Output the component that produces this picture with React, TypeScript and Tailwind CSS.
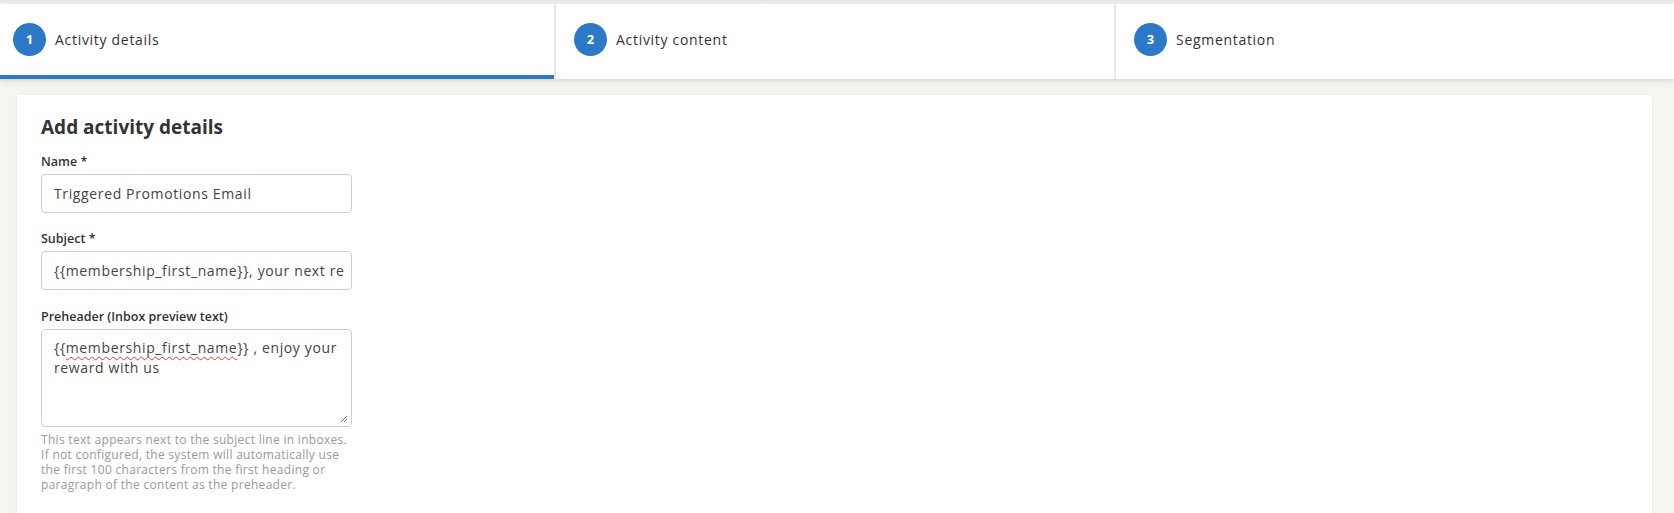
import React from 'react'

const steps = [
  { n: 1, label: 'Activity details', active: true },
  { n: 2, label: 'Activity content', active: false },
  { n: 3, label: 'Segmentation', active: false },
]

function Label({ children }: { children: React.ReactNode }) {
  return <div className="mb-[4px] text-[12.5px] leading-[16px] font-semibold text-[#333]">{children}</div>
}

export default function App() {
  return (
    <div className="min-h-screen bg-[#f5f4f1] font-['Open_Sans',sans-serif] text-[#333]">
      {/* header shadow */}
      <div className="h-[4px] bg-gradient-to-b from-[#e4e4e2] to-[#f1f1ef]" />

      {/* Stepper */}
      <div className="grid grid-cols-[554px_558px_1fr] gap-[2px] bg-[#e9e9e7] shadow-[0_2px_4px_rgba(0,0,0,0.12)]">
        {steps.map((s) => (
          <div
            key={s.n}
            className={
              s.active
                ? 'flex h-[75px] items-center gap-[9px] border-b-4 border-[#2b79c7] bg-white pl-[13px]'
                : 'flex h-[75px] items-center gap-[9px] border-b-4 border-transparent bg-white pl-[18px]'
            }
          >
            <span className="flex h-[33px] w-[33px] items-center justify-center rounded-full bg-[#2b79c7] text-[13px] font-bold text-white">
              {s.n}
            </span>
            <span className="text-[14px] font-medium tracking-[0.05em] text-[#333]">{s.label}</span>
          </div>
        ))}
      </div>

      {/* Card */}
      <div className="pl-[17px] pr-[22px] pt-[16px]">
        <div className="rounded-[4px] bg-white px-[24px] pt-[19px] pb-[20px] shadow-[0_1px_3px_rgba(0,0,0,0.08)]">
          <h2 className="text-[19px] leading-[26px] font-bold text-[#333]">Add activity details</h2>

          <div className="mt-[14px]">
            <Label>Name *</Label>
            <div className="flex h-[39px] w-[311px] items-center rounded-[4px] border border-[#cfcfcf] px-[12px] text-[14px] tracking-[0.045em] text-[#444]">
              Triggered Promotions Email
            </div>
          </div>

          <div className="mt-[18px]">
            <Label>Subject *</Label>
            <div className="flex h-[39px] w-[311px] items-center overflow-hidden whitespace-nowrap rounded-[4px] border border-[#cfcfcf] px-[12px] text-[14px] tracking-[0.045em] text-[#444]">
              {'{{membership_first_name}}, your next re'}
            </div>
          </div>

          <div className="mt-[19px]">
            <Label>Preheader (Inbox preview text)</Label>
            <div className="relative h-[98px] w-[311px] rounded-[4px] border border-[#cfcfcf] px-[12px] pt-[8px] text-[14px] leading-[20px] tracking-[0.045em] text-[#444]">
              {'{{'}
              <span className="underline decoration-wavy decoration-[#e53935] decoration-1 underline-offset-[3px]">
                membership_first_name
              </span>
              {'}} , enjoy your reward with us'}
              <svg className="absolute bottom-[3px] right-[3px]" width="8" height="8" viewBox="0 0 8 8">
                <path d="M7 1 L1 7 M7 4 L4 7" stroke="#777" strokeWidth="1" />
              </svg>
            </div>
            <p className="mt-[5px] whitespace-nowrap text-[12px] leading-[15px] tracking-[0.025em] text-[#9a9a9a]">
              This text appears next to the subject line in inboxes.
              <br />
              If not configured, the system will automatically use
              <br />
              the first 100 characters from the first heading or
              <br />
              paragraph of the content as the preheader.
            </p>
          </div>

          <div className="mt-[19px]">
            <Label>Sender name *</Label>
          </div>
        </div>
      </div>
    </div>
  )
}
